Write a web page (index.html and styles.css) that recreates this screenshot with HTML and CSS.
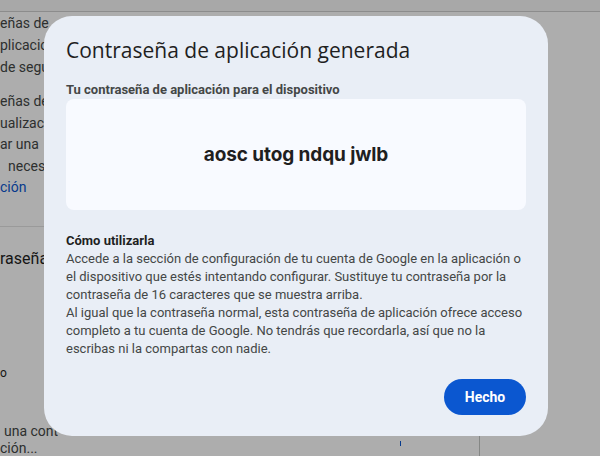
FILE: index.html
```html
<!DOCTYPE html>
<html lang="es">
<head>
<meta charset="utf-8">
<title>Contraseña de aplicación generada</title>
<link rel="stylesheet" href="styles.css">
</head>
<body>
<div class="page">
  <div class="topbar"></div>
  <div class="content">
    <p class="para first">
      <span class="line">eñas de</span>
      <span class="line">plicacio</span>
      <span class="line">de segu</span>
    </p>
    <p class="para second">
      <span class="line">eñas de</span>
      <span class="line">ualizac</span>
      <span class="line">ar una</span>
      <span class="line indent">necesi</span>
      <span class="line link">ción</span>
    </p>
    <hr class="divider">
    <h2 class="heading">raseña</h2>
    <p class="single">o</p>
    <div class="bottom-row">
      <div class="cell">
        <span class="line indent-s">una cont</span>
        <span class="line">ción...</span>
        <span class="tick"></span>
      </div>
    </div>
  </div>
</div>
<div class="scrim"></div>
<div class="dialog" role="dialog" aria-labelledby="dlg-title">
  <h1 class="dialog-title" id="dlg-title">Contraseña de aplicación generada</h1>
  <div class="pw-label">Tu contraseña de aplicación para el dispositivo</div>
  <div class="pw-box"><span class="pw">aosc utog ndqu jwlb</span></div>
  <div class="howto">
    <div class="howto-title">Cómo utilizarla</div>
    <div class="howto-text">Accede a la sección de configuración de tu cuenta de Google en la aplicación o<br>el dispositivo que estés intentando configurar. Sustituye tu contraseña por la<br>contraseña de 16 caracteres que se muestra arriba.</div>
    <div class="howto-text">Al igual que la contraseña normal, esta contraseña de aplicación ofrece acceso<br>completo a tu cuenta de Google. No tendrás que recordarla, así que no la<br>escribas ni la compartas con nadie.</div>
  </div>
  <div class="actions"><button class="btn-done" type="button">Hecho</button></div>
</div>
</body>
</html>
```
FILE: styles.css
```css
html, body {
  margin: 0;
  padding: 0;
}
body {
  width: 600px;
  height: 456px;
  overflow: hidden;
  background: #ffffff;
  font-family: Roboto, "Liberation Sans", Arial, sans-serif;
  position: relative;
}
.page {
  width: 600px;
  height: 456px;
  overflow: hidden;
  color: #444746;
  font-size: 14px;
}
.topbar {
  height: 11px;
  background: #f8f8f8;
  border-bottom: 1px solid #cfcfcf;
}
.para {
  margin: 0;
  line-height: 22px;
}
.para.second {
  margin-top: 13px;
  line-height: 21.5px;
}
.line {
  display: block;
  white-space: nowrap;
}
.indent {
  padding-left: 8px;
}
.indent-s {
  padding-left: 4px;
}
.link {
  color: #0b57d0;
}
.divider {
  margin: 27px 0 0;
  border: 0;
  border-top: 1px solid #e3e3e3;
  width: 60px;
}
.heading {
  margin: 20px 0 0;
  font-size: 16px;
  font-weight: 400;
  line-height: 24px;
  color: #1f1f1f;
  white-space: nowrap;
}
.single {
  margin: 90px 0 0;
  line-height: 24px;
  color: #1f1f1f;
  font-size: 12px;
}
.bottom-row {
  margin-top: 38px;
  display: flex;
}
.cell {
  width: 479px;
  border-right: 1px solid #c4c7c5;
  line-height: 17px;
  position: relative;
}
.tick {
  position: absolute;
  left: 400px;
  top: 18px;
  width: 1px;
  height: 5px;
  background: #0b57d0;
}
.scrim {
  position: absolute;
  inset: 0;
  background: rgba(0, 0, 0, 0.32);
}
.dialog {
  position: absolute;
  left: 44px;
  top: 16px;
  width: 460px;
  height: 379px;
  padding: 20px 22px 21px;
  background: #e9eef6;
  border-radius: 28px;
  display: flex;
  flex-direction: column;
}
.dialog-title {
  margin: 0;
  font-family: "Open Sans", Roboto, sans-serif;
  font-size: 21px;
  font-weight: 400;
  line-height: 28px;
  color: #1f1f1f;
}
.pw-label {
  margin-top: 18px;
  font-size: 13px;
  font-weight: 700;
  line-height: 16px;
  color: #444746;
}
.pw-box {
  margin-top: 1px;
  height: 111px;
  background: #f8faff;
  border-radius: 8px;
  display: flex;
  align-items: center;
  justify-content: center;
}
.pw {
  font-family: Inter, Roboto, sans-serif;
  font-size: 19px;
  font-weight: 700;
  color: #1f1f1f;
  letter-spacing: -0.1px;
}
.howto {
  margin-top: 22px;
  font-size: 13px;
  line-height: 18px;
  color: #444746;
  white-space: nowrap;
}
.howto-title {
  font-size: 13px;
  font-weight: 700;
  color: #1f1f1f;
}
.actions {
  margin-top: auto;
  display: flex;
  justify-content: flex-end;
}
.btn-done {
  width: 82px;
  height: 36px;
  border: 0;
  border-radius: 18px;
  background: #0b57d0;
  color: #ffffff;
  font-family: Roboto, sans-serif;
  font-size: 14px;
  font-weight: 700;
  padding: 0;
}
```
